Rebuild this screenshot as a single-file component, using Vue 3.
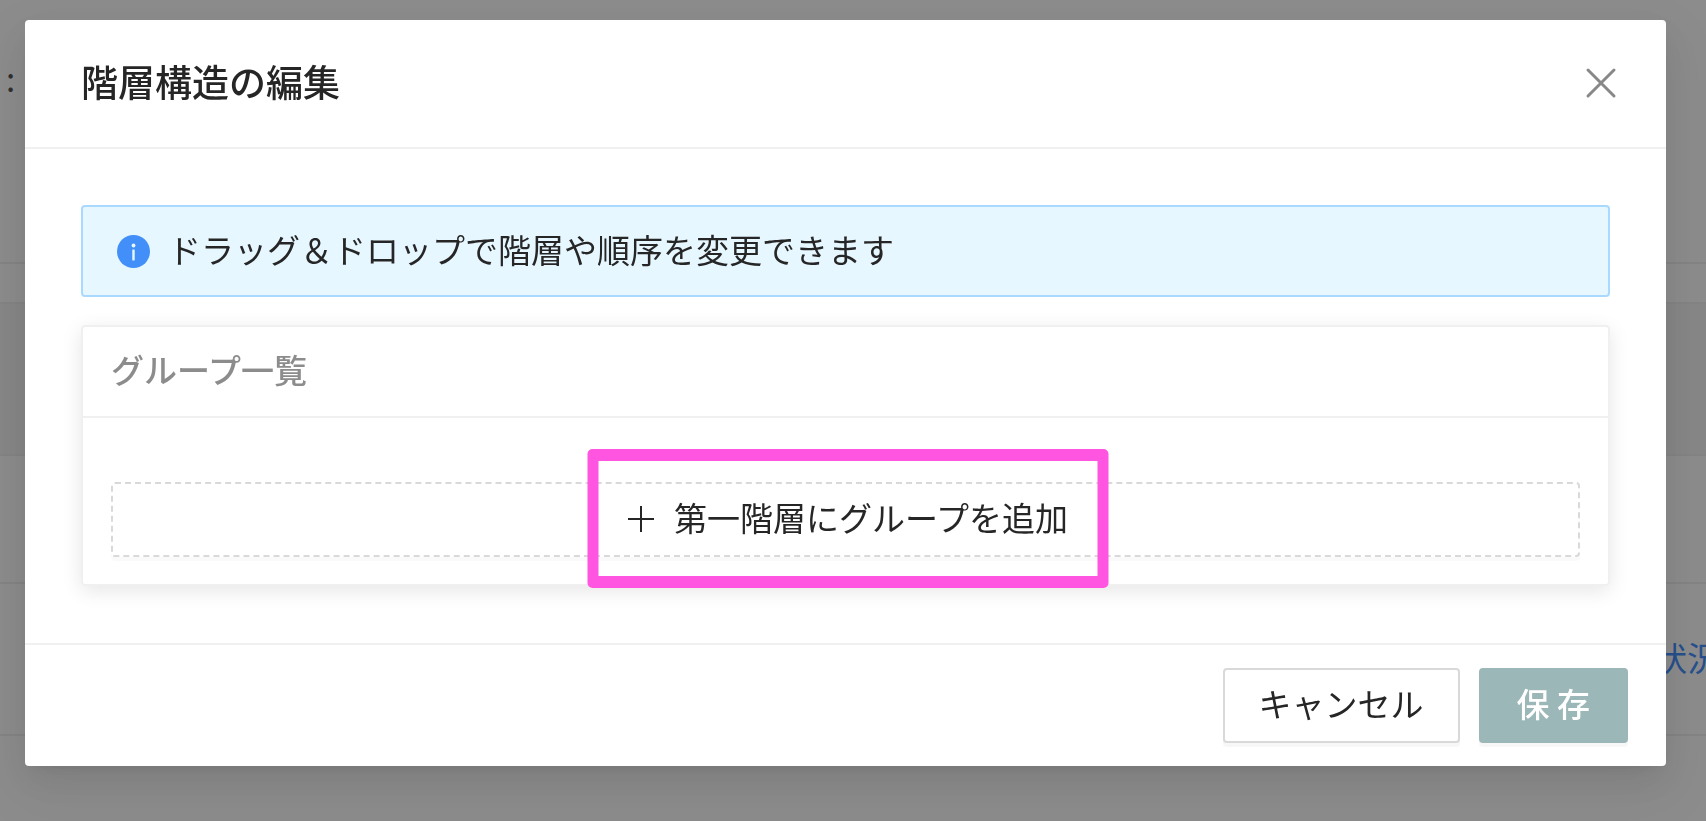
<template>
  <div class="page">
    <div class="page-head">:</div>
    <div class="page-row toolbar"></div>
    <div class="page-row table-head"></div>
    <div class="page-row short"></div>
    <div class="page-row status">
      <a href="#">状況</a>
    </div>
  </div>

  <div class="mask">
    <section class="modal" role="dialog" aria-labelledby="modal-title">
      <header class="modal-header">
        <h1 id="modal-title">階層構造の編集</h1>
        <button class="close" type="button" aria-label="閉じる">
          <svg viewBox="0 0 38 38" width="38" height="38">
            <path
              d="M6 6L32 32M32 6L6 32"
              stroke="currentColor"
              stroke-width="3"
              stroke-linecap="round"
            />
          </svg>
        </button>
      </header>

      <div class="modal-body">
        <div class="alert" role="status">
          <svg class="alert-icon" viewBox="0 0 33 33" width="33" height="33">
            <circle cx="16.5" cy="16.5" r="16.5" fill="#438ff9" />
            <circle cx="16.5" cy="10.5" r="1.9" fill="#e6f7ff" />
            <rect x="15.3" y="14.5" width="2.4" height="11" rx="0.4" fill="#e6f7ff" />
          </svg>
          <span class="alert-text">ドラッグ＆ドロップで階層や順序を変更できます</span>
        </div>

        <div class="card">
          <h2 class="card-title">グループ一覧</h2>
          <div class="card-body">
            <button class="add" type="button">
              <svg viewBox="0 0 33 33" width="33" height="33">
                <path d="M18 5V31M5 18H31" stroke="currentColor" stroke-width="2" />
              </svg>
              <span>第一階層にグループを追加</span>
            </button>
            <div class="highlight"></div>
          </div>
        </div>
      </div>

      <footer class="modal-footer">
        <button class="btn" type="button">キャンセル</button>
        <button class="btn primary" type="button">保 存</button>
      </footer>
    </section>
  </div>
</template>

<script setup></script>

<style>
body {
  margin: 0;
  overflow: hidden;
}
</style>

<style scoped>
.page,
.mask,
button {
  font-family: "Noto Sans CJK JP", sans-serif;
  font-size: 33px;
  line-height: 52px;
}
.page,
.mask,
.page *,
.mask * {
  box-sizing: border-box;
}
.page {
  min-height: 100vh;
  overflow: hidden;
  background: #fff;
  color: #555;
}
.page-head {
  height: 264px;
  padding: 52px 6px;
  border-bottom: 2px solid #f0f0f0;
}
.page-row {
  height: 152px;
  border-bottom: 2px solid #f0f0f0;
}
.toolbar {
  height: 40px;
}
.table-head {
  background: #f5f5f5;
}
.short {
  height: 128px;
}
.status {
  display: flex;
  align-items: center;
  justify-content: flex-end;
  margin-right: -14px;
  padding-bottom: 4px;
}
.status a {
  color: #4690ff;
  text-decoration: none;
}
.mask {
  position: fixed;
  inset: 0;
  padding: 20px 40px 54px 25px;
  background: rgba(0, 0, 0, 0.45);
}
.modal {
  border-radius: 4px;
  background: #fff;
  box-shadow:
    0 7px 14px -9px rgba(0, 0, 0, 0.12),
    0 14px 37px rgba(0, 0, 0, 0.08),
    0 21px 64px 18px rgba(0, 0, 0, 0.05);
  color: #262626;
}
.modal-header {
  display: flex;
  align-items: center;
  justify-content: space-between;
  padding: 37px 46px 38px 56px;
  border-bottom: 2px solid #f0f0f0;
}
.modal-header h1 {
  margin: 0;
  padding-bottom: 4px;
  font-size: 37px;
  font-weight: 500;
  line-height: 48px;
}
.close {
  display: flex;
  padding: 0;
  border: 0;
  background: none;
  color: #888;
  cursor: pointer;
}
.modal-body {
  padding: 56px 56px 57px;
}
.alert {
  display: flex;
  align-items: center;
  gap: 18px;
  padding: 16px 34px;
  border: 2px solid #a9d9ff;
  border-radius: 4px;
  background: #e6f7ff;
}
.alert-text {
  padding-bottom: 4px;
}
.card {
  margin-top: 28px;
  border: 2px solid #f0f0f0;
  border-radius: 4px;
  box-shadow: 0 5px 20px rgba(0, 0, 0, 0.1);
}
.card-title {
  margin: 0;
  padding: 16px 28px 21px;
  border-bottom: 2px solid #f0f0f0;
  color: #8c8c8c;
  font-size: 33px;
  font-weight: 500;
}
.card-body {
  position: relative;
  padding: 64px 28px 27px;
}
.add {
  display: flex;
  align-items: center;
  justify-content: center;
  gap: 18px;
  width: 100%;
  padding: 7px 10px 12px;
  border: 2px dashed #d9d9d9;
  border-radius: 4px;
  background: #fff;
  box-shadow: 0 4px 0 rgba(0, 0, 0, 0.02);
  color: #262626;
  cursor: pointer;
}
/* marker frame over the add button */
.highlight {
  position: absolute;
  bottom: -4px;
  left: calc(50% + 2px);
  width: 521px;
  height: 139px;
  transform: translateX(-50%);
  border: 12px solid #ff55e1;
  border-width: 12px 11px;
  border-radius: 5px;
  pointer-events: none;
}
.modal-footer {
  display: flex;
  justify-content: flex-end;
  gap: 19px;
  padding: 23px 38px;
  border-top: 2px solid #f0f0f0;
}
.btn {
  padding: 7px 34px 12px;
  border: 2px solid #d9d9d9;
  border-radius: 4px;
  background: #fff;
  box-shadow: 0 4px 0 rgba(0, 0, 0, 0.03);
  color: #262626;
  cursor: pointer;
}
.primary {
  padding-right: 36px;
  padding-left: 36px;
  border-color: #9cb7b8;
  background: #9cb7b8;
  color: #fff;
  font-weight: 500;
}
</style>
